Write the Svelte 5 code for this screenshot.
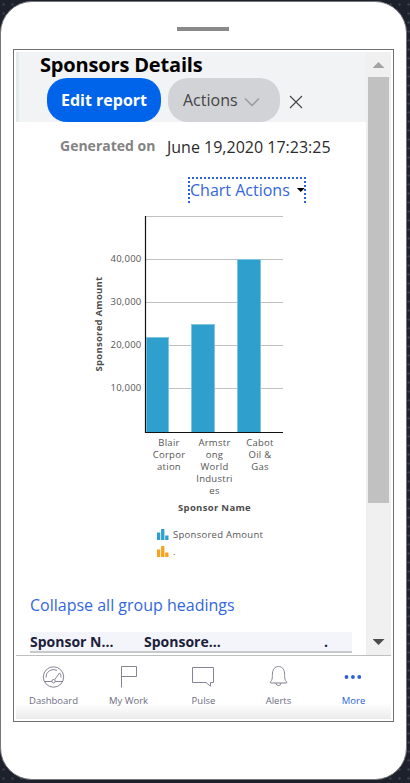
<script lang="ts">
	const ticks = [
		{ label: '', y: 11.5 },
		{ label: '40,000', y: 54.5 },
		{ label: '30,000', y: 97.5 },
		{ label: '20,000', y: 140.5 },
		{ label: '10,000', y: 183.5 }
	];

	const bars = [
		{ x: 61, width: 23, top: 132, center: 84, lines: ['Blair', 'Corpor', 'ation'] },
		{ x: 106, width: 24, top: 119, center: 129.5, lines: ['Armstr', 'ong', 'World', 'Industri', 'es'] },
		{ x: 152, width: 24, top: 54, center: 175, lines: ['Cabot', 'Oil &', 'Gas'] }
	];

	const series = [
		{ name: 'Sponsored Amount', color: '#2f9fce' },
		{ name: '.', color: '#f5a31a' }
	];

	const tabs = ['Dashboard', 'My Work', 'Pulse', 'Alerts', 'More'];
	let active = $state('More');
</script>

<div class="backdrop">
	<div class="phone">
		<div class="speaker"></div>
		<div class="screen">
			<div class="view">
				<main>
					<header>
						<h1>Sponsors Details</h1>
						<div class="buttons">
							<button class="edit">Edit report</button>
							<button class="actions">
								Actions
								<svg width="16" height="10" viewBox="0 0 16 10">
									<path d="M1 1.5 8 8.5 15 1.5" />
								</svg>
							</button>
							<button class="close" aria-label="Close">
								<svg width="14" height="14" viewBox="0 0 14 14">
									<path d="M1 1 13 13M13 1 1 13" />
								</svg>
							</button>
						</div>
					</header>

					<div class="generated">
						<span class="label">Generated on</span>
						<span class="date">June 19,2020 17:23:25</span>
					</div>

					<div class="chart-menu">
						<a href="#chart">Chart Actions</a>
						<span class="caret"></span>
					</div>

					<svg class="chart" width="210" height="366" viewBox="0 0 210 366">
						{#each ticks as tick (tick.y)}
							<line class="grid" x1="61" x2="198" y1={tick.y} y2={tick.y} />
							{#if tick.label}
								<text x="56.5" y={tick.y + 2.5} text-anchor="end" textLength="31">{tick.label}</text>
							{/if}
						{/each}
						{#each bars as bar (bar.x)}
							<rect class="edge" x={bar.x} y={bar.top} width={bar.width} height={227 - bar.top} />
							<rect class="bar" x={bar.x + 1} y={bar.top + 1} width={bar.width - 2} height={226 - bar.top} />
							{#each bar.lines as line, i (line)}
								<text x={bar.center} y={241 + i * 12} text-anchor="middle">{line}</text>
							{/each}
						{/each}
						<path class="axis" d="M60.5 11V227.5H198" />
						<text class="title" transform="translate(17 119) rotate(-90)" text-anchor="middle" textLength="95">Sponsored Amount</text>
						<text class="title" x="129.5" y="306" text-anchor="middle" textLength="73">Sponsor Name</text>
						{#each series as item, i (item.name)}
							<g transform="translate(72 {324 + i * 17})">
								<path d="M0 3.5h3.3v7.5H0zM4.1 0h3.3v11H4.1zM8.2 6.5h3.3v4.5H8.2z" fill={item.color} />
								<text x="16" y="9">{item.name}</text>
							</g>
						{/each}
					</svg>

					<a class="collapse" href="#groups">Collapse all group headings</a>

					<div class="columns">
						<span>Sponsor N...</span>
						<span>Sponsore...</span>
						<span class="last">.</span>
					</div>
				</main>
				<div class="scrollbar">
					<span class="arrow up"></span>
					<div class="thumb"></div>
					<span class="arrow down"></span>
				</div>
			</div>

			<nav>
				{#each tabs as tab (tab)}
					<button class="tab" class:active={active === tab} onclick={() => (active = tab)}>
						<svg width="25" height="24" viewBox="-0.5 0 25 24">
							{#if tab === 'Dashboard'}
								<circle cx="12" cy="12" r="10.2" />
								<path d="M2.5 16.5h7.8M13.7 16.5h7.8M4.5 12.5A7.5 7.5 0 0 1 15.5 5.4M18.5 8.5A8 8 0 0 1 19.5 12.5M13 14.8 18.2 7.8" />
								<circle cx="12" cy="16.2" r="1.7" />
							{:else if tab === 'My Work'}
								<path d="M5 22.5V1.5H20V11.5H5" />
							{:else if tab === 'Pulse'}
								<path d="M1 2.5H22V17.5H19V21.2L14.5 17.5H1Z" />
							{:else if tab === 'Alerts'}
								<path d="M3.5 17.3C6.5 15 5.7 11 6 8C6.4 4 8.5 1.5 12 1.5S17.6 4 18 8C18.3 11 17.5 15 20.5 17.3Q20.5 18 19.5 18H4.5Q3.5 18 3.5 17.3ZM9.3 18Q10 20.6 12 20.6T14.7 18" />
							{:else}
								<g class="dots">
									<circle cx="5" cy="12" r="1.9" />
									<circle cx="11.4" cy="12" r="1.9" />
									<circle cx="17.8" cy="12" r="1.9" />
								</g>
							{/if}
						</svg>
						{tab}
					</button>
				{/each}
			</nav>
		</div>
	</div>
</div>

<style>
	:global(body) {
		overflow: hidden;
	}
	.backdrop,
	.backdrop * {
		box-sizing: border-box;
	}
	.backdrop {
		width: 410px;
		height: 783px;
		padding-top: 1px;
		background-color: #1d212b;
		background-image: radial-gradient(circle, #363a46 1px, transparent 1.5px);
		background-size: 9px 9px;
		background-position: -1px 0;
		font-family: 'Open Sans', 'Noto Sans', sans-serif;
	}
	.phone {
		width: 407px;
		height: 779px;
		border: 1px solid #77777b;
		border-radius: 32px;
		background: #fff;
		padding: 25px 0 0 12px;
	}
	.speaker {
		width: 52px;
		height: 4px;
		margin-left: 164px;
		background: #8a8a8a;
	}
	.screen {
		width: 381px;
		height: 673px;
		margin-top: 18px;
		border: 1px solid #707070;
		padding: 2px;
	}
	.view {
		display: flex;
		height: 603px;
	}
	main {
		display: flex;
		flex-direction: column;
		width: 350px;
		overflow: hidden;
	}
	header {
		height: 70px;
		flex: none;
		background: #f2f3f5;
		border-left: 3px solid #e4e9ea;
	}
	h1 {
		margin: 0;
		padding-left: 21px;
		font-size: 20px;
		letter-spacing: -0.17px;
		line-height: 26px;
		font-weight: 700;
		color: #000;
		white-space: nowrap;
	}
	button {
		border: 0;
		padding: 0;
		background: none;
		font-family: inherit;
	}
	svg {
		fill: none;
	}
	.buttons {
		display: flex;
		padding-left: 28px;
	}
	.edit,
	.actions {
		height: 44px;
		border-radius: 20px;
		font-size: 16px;
		white-space: nowrap;
	}
	.edit {
		width: 114px;
		background: #0064ea;
		color: #fff;
		font-weight: 700;
	}
	.actions {
		display: flex;
		align-items: center;
		gap: 6px;
		width: 112px;
		margin-left: 7px;
		padding-left: 15px;
		background: #d2d3d7;
		color: #444;
	}
	.actions svg {
		margin-top: 3px;
		stroke: #999;
		stroke-width: 1.5;
	}
	.close {
		display: flex;
		align-items: center;
		height: 48px;
		margin-left: 9px;
	}
	.close svg {
		stroke: #444;
		stroke-width: 1.1;
	}
	.generated {
		display: flex;
		flex: none;
		height: 55px;
		padding: 12px 0 0 44px;
		white-space: nowrap;
	}
	.label {
		width: 107px;
		font-size: 14px;
		line-height: 24px;
		font-weight: 700;
		color: #838383;
	}
	.date {
		font-size: 16px;
		line-height: 26px;
		color: #2b2b2b;
	}
	.chart-menu {
		display: flex;
		flex: none;
		width: 118px;
		height: 26px;
		margin-left: 172px;
		border: 2px dotted #2b61da;
		border-bottom: 0;
		white-space: nowrap;
	}
	a {
		font-size: 16px;
		line-height: 22px;
		color: #3367de;
		text-decoration: none;
	}
	.caret {
		margin: 9px 0 0 7px;
		width: 8px;
		height: 4px;
		flex: none;
		background: #000;
		clip-path: polygon(0 0, 100% 0, 50% 100%);
	}
	.chart {
		flex: none;
		margin: 2px 0 0 69px;
	}
	.chart text {
		fill: #555;
		font-size: 9.5px;
		letter-spacing: 0.27px;
	}
	.chart .title {
		fill: #4c4c4c;
		font-weight: 700;
	}
	.grid {
		stroke: #c0c0c0;
	}
	.edge {
		fill: #7fc4e1;
	}
	.bar {
		fill: #2f9fce;
	}
	.axis {
		stroke: #111;
		stroke-width: 1.2;
	}
	.collapse {
		flex: none;
		height: 39px;
		margin: 22px 0 0 14px;
		line-height: 24px;
	}
	.columns {
		display: flex;
		flex: none;
		width: 322px;
		height: 21px;
		margin-left: 14px;
		background: #f4f5fa;
		border-bottom: 2px solid #c9c9c9;
		font-size: 14px;
		line-height: 20px;
		font-weight: 700;
		color: #20203a;
		white-space: nowrap;
	}
	.columns span {
		flex: none;
		width: 114px;
	}
	.columns .last {
		width: 94px;
		padding-left: 66px;
	}
	.scrollbar {
		display: flex;
		flex-direction: column;
		align-items: center;
		width: 25px;
		background: #f0f0f0;
	}
	.arrow {
		width: 12px;
		height: 6px;
	}
	.up {
		margin: 10px 0 9px;
		background: #a3a3a3;
		clip-path: polygon(50% 0, 100% 100%, 0 100%);
	}
	.down {
		margin: auto 0 10px;
		background: #4c4c4c;
		clip-path: polygon(0 0, 100% 0, 50% 100%);
	}
	.thumb {
		width: 21px;
		height: 426px;
		background: #c1c1c1;
	}
	nav {
		display: flex;
		height: 64px;
		border-top: 1px solid #bfbfbf;
		background: linear-gradient(#fff 75%, #ebebeb);
	}
	.tab {
		display: flex;
		flex-direction: column;
		align-items: center;
		width: 75px;
		padding-top: 9px;
		gap: 5px;
		font-size: 9.5px;
		line-height: 13px;
		color: #6c6c80;
	}
	.tab svg {
		stroke: #858595;
		stroke-width: 1;
	}
	.tab.active {
		color: #2b61da;
	}
	.tab .dots {
		fill: #2b61da;
		stroke: none;
	}
</style>
